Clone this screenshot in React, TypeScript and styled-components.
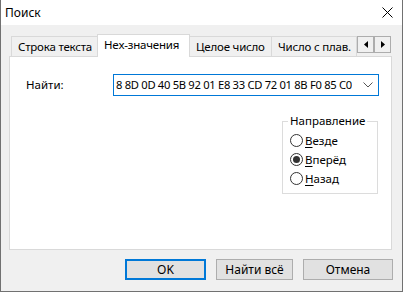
import React, { useState } from 'react'
import styled, { createGlobalStyle } from 'styled-components'

const GlobalStyle = createGlobalStyle`
    html, body {
        margin: 0;
        padding: 0;
        background: #ffffff;
    }
    body {
        font-family: "Noto Sans", "Open Sans", sans-serif;
        font-size: 11.5px;
        color: #000000;
    }
    * {
        box-sizing: border-box;
    }
`

const Window = styled.div`
    width: 403px;
    height: 292px;
    display: flex;
    flex-direction: column;
    border: 1px solid #717171;
    border-top: none;
    background: #f0f0f0;
    overflow: hidden;
`

const TitleBar = styled.div`
    height: 25px;
    flex: none;
    display: flex;
    align-items: center;
    justify-content: space-between;
    background: #ffffff;
    padding: 0 9px 0 4px;
    font-size: 12px;
    line-height: 16px;
`

const Body = styled.div`
    flex: 1;
    display: flex;
    flex-direction: column;
    padding: 9px 10px 0 8px;
`

const TabStrip = styled.div`
    height: 22px;
    display: flex;
    align-items: flex-end;
    padding-left: 2px;
    position: relative;
    z-index: 1;
`

const Tab = styled.div<{ $active?: boolean; $w: number }>`
    width: ${p => p.$w}px;
    flex: none;
    height: ${p => (p.$active ? 23 : 20)}px;
    margin-bottom: ${p => (p.$active ? -1 : 0)}px;
    background: ${p => (p.$active ? '#ffffff' : '#f0f0f0')};
    border: 1px solid #d9d9d9;
    border-bottom: none;
    margin-left: -1px;
    &:first-child { margin-left: 0; }
    padding: 2px 0 0 6px;
    white-space: nowrap;
    overflow: hidden;
    line-height: 16px;
    letter-spacing: -0.2px;
    z-index: ${p => (p.$active ? 2 : 1)};
`

const ScrollButtons = styled.div`
    display: flex;
    align-self: flex-start;
    margin-top: 2px;
    background: #f0f0f0;
`

const ScrollButton = styled.div`
    width: 17px;
    height: 17px;
    border: 1px solid #adadad;
    background: #f0f0f0;
    display: flex;
    align-items: center;
    justify-content: center;
`

const Panel = styled.div`
    height: 194px;
    background: #ffffff;
    border: 1px solid #d9d9d9;
    display: flex;
    flex-direction: column;
    padding: 17px 12px 0 16px;
`

const FindRow = styled.div`
    display: flex;
    align-items: center;
    justify-content: space-between;
`

const Label = styled.span`
    line-height: 16px;
`

const Combo = styled.div`
    width: 266px;
    height: 22px;
    border: 1px solid #0078d7;
    display: flex;
    align-items: center;
    justify-content: space-between;
    padding: 0 5px 0 2px;
    white-space: nowrap;
    overflow: hidden;
`

const ComboText = styled.span`
    font-size: 11.2px;
    line-height: 16px;
    letter-spacing: -0.3px;
    overflow: hidden;
`

const Chevron = styled.svg`
    flex: none;
    margin-left: 4px;
`

const Group = styled.fieldset`
    align-self: flex-end;
    width: 96px;
    margin: 17px 1px 0 0;
    padding: 2px 0 5px 7px;
    border: 1px solid #dcdcdc;
    min-width: 0;
`

const Legend = styled.legend`
    padding: 0 2px;
    margin-left: -2px;
    line-height: 16px;
    color: #000000;
`

const RadioRow = styled.label`
    display: flex;
    align-items: center;
    height: 19px;
    gap: 2px;
    cursor: default;
`

const RadioCircle = styled.span<{ $on?: boolean }>`
    width: 13px;
    height: 13px;
    flex: none;
    border-radius: 50%;
    border: 1px solid #333333;
    background: #ffffff;
    display: flex;
    align-items: center;
    justify-content: center;
    &::after {
        content: '';
        width: 7px;
        height: 7px;
        border-radius: 50%;
        background: ${p => (p.$on ? '#333333' : 'transparent')};
    }
`

const Accel = styled.span`
    text-decoration: underline;
    text-underline-offset: 2px;
`

const ButtonRow = styled.div`
    display: flex;
    justify-content: flex-end;
    gap: 10px;
    margin: 9px -1px 0 0;
`

const Button = styled.button<{ $default?: boolean; $w: number }>`
    width: ${p => p.$w}px;
    height: 21px;
    font-family: inherit;
    font-size: 12px;
    color: #000000;
    background: #e1e1e1;
    border: ${p => (p.$default ? '2px solid #0078d7' : '1px solid #adadad')};
    padding: 0;
    line-height: 16px;
`

const directions = [
    { key: 'all', accel: 'В', rest: 'езде' },
    { key: 'fwd', accel: 'В', rest: 'перёд' },
    { key: 'back', accel: 'Н', rest: 'азад' },
]

export default function App() {
    const [dir, setDir] = useState('fwd')
    return (
        <Window>
            <GlobalStyle />
            <TitleBar>
                <span>Поиск</span>
                <svg width="11" height="11" viewBox="0 0 11 11">
                    <path d="M0.5 0.5 L10.5 10.5 M10.5 0.5 L0.5 10.5" stroke="#000" strokeWidth="1" />
                </svg>
            </TitleBar>
            <Body>
                <TabStrip>
                    <Tab $w={87}>Строка текста</Tab>
                    <Tab $w={93} $active>Hex-значения</Tab>
                    <Tab $w={83}>Целое число</Tab>
                    <Tab $w={86}>Число с плав.</Tab>
                    <ScrollButtons>
                        <ScrollButton>
                            <svg width="4" height="7" viewBox="0 0 4 7"><path d="M4 0 L0 3.5 L4 7 Z" fill="#000" /></svg>
                        </ScrollButton>
                        <ScrollButton>
                            <svg width="4" height="7" viewBox="0 0 4 7"><path d="M0 0 L4 3.5 L0 7 Z" fill="#000" /></svg>
                        </ScrollButton>
                    </ScrollButtons>
                </TabStrip>
                <Panel>
                    <FindRow>
                        <Label>Найти:</Label>
                        <Combo>
                            <ComboText>8 8D 0D 40 5B 92 01 E8 33 CD 72 01 8B F0 85 C0</ComboText>
                            <Chevron width="10" height="6" viewBox="0 0 10 6">
                                <path d="M0.5 0.5 L5 5 L9.5 0.5" stroke="#555" strokeWidth="1" fill="none" />
                            </Chevron>
                        </Combo>
                    </FindRow>
                    <Group>
                        <Legend>Направление</Legend>
                        {directions.map(d => (
                            <RadioRow key={d.key} onClick={() => setDir(d.key)}>
                                <RadioCircle $on={dir === d.key} />
                                <span><Accel>{d.accel}</Accel>{d.rest}</span>
                            </RadioRow>
                        ))}
                    </Group>
                </Panel>
                <ButtonRow>
                    <Button $w={81} $default>OK</Button>
                    <Button $w={77}>Найти всё</Button>
                    <Button $w={90}>Отмена</Button>
                </ButtonRow>
            </Body>
        </Window>
    )
}
